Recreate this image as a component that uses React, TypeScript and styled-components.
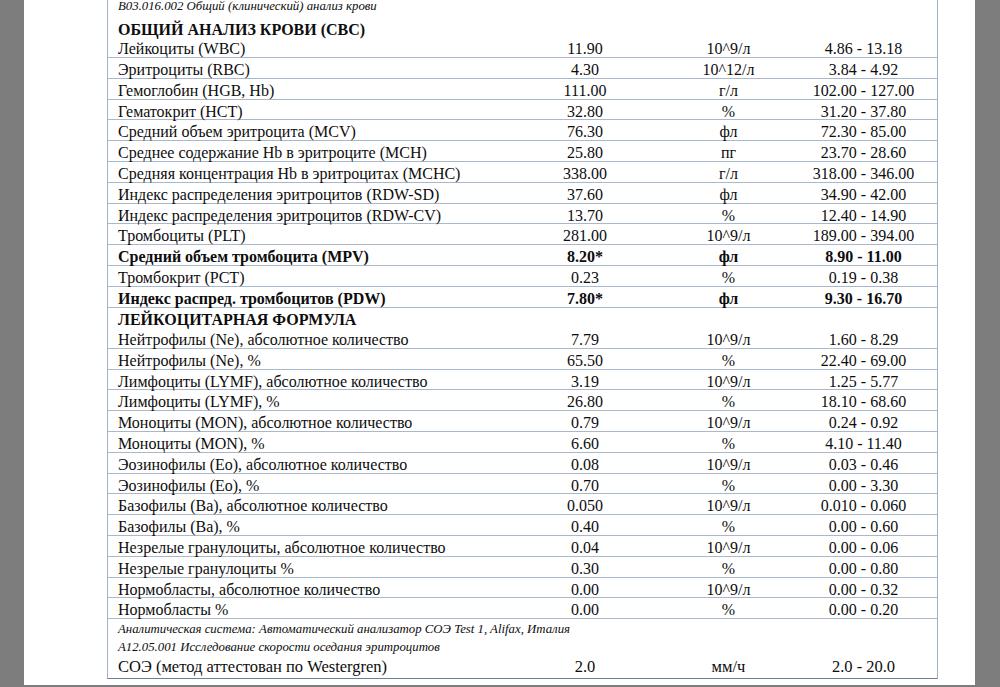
import React from 'react';
import styled, { createGlobalStyle } from 'styled-components';

const GlobalStyle = createGlobalStyle`
  html, body { margin: 0; padding: 0; background: #7d7d7d; }
  body { font-family: "Liberation Serif", "Times New Roman", serif; color: #0d0d0d; }
`;

const Screen = styled.div`
  width: 1000px;
  height: 687px;
  overflow: hidden;
  background: #7d7d7d;
`;

const Sheet = styled.div`
  width: 951px;
  height: 100%;
  margin-left: 24px;
  background: #ffffff;
  padding-left: 83px;
  box-sizing: border-box;
`;

const Table = styled.div`
  width: 831px;
  border-left: 1px solid #a3b3c7;
  border-right: 1px solid #a3b3c7;
  border-bottom: 1px solid #6a7f9c;
  margin-top: -2px;
  box-sizing: border-box;
`;

const Row = styled.div<{ $bold?: boolean }>`
  display: grid;
  grid-template-columns: 395px 164px 123px 147px;
  height: 20.8px;
  box-sizing: border-box;
  border-bottom: 1px solid #a9b8cb;
  font-size: 16px;
  line-height: 16px;
  font-weight: ${(p) => (p.$bold ? 700 : 400)};
`;

const LastRow = styled(Row)`
  height: 23px;
  border-bottom: none;
  font-size: 16.5px;
`;

const Name = styled.div`
  padding: 4px 0 0 10px;
  white-space: nowrap;
`;

const Cell = styled.div`
  padding-top: 4px;
  text-align: center;
  white-space: nowrap;
`;

const Heading = styled.div<{ $h: number }>`
  height: ${(p) => p.$h}px;
  box-sizing: border-box;
  padding: 4.6px 0 0 10px;
  font-size: 16px;
  line-height: 16px;
  font-weight: 700;
  white-space: nowrap;
`;

const Note = styled.div<{ $h: number; $pt: number }>`
  height: ${(p) => p.$h}px;
  box-sizing: border-box;
  padding: ${(p) => p.$pt}px 0 0 10px;
  font-size: 12.8px;
  line-height: 13px;
  font-style: italic;
  white-space: nowrap;
`;

type R = [string, string, string, string, boolean?];

const cbc: R[] = [
  ['Лейкоциты (WBC)', '11.90', '10^9/л', '4.86 - 13.18'],
  ['Эритроциты (RBC)', '4.30', '10^12/л', '3.84 - 4.92'],
  ['Гемоглобин (HGB, Hb)', '111.00', 'г/л', '102.00 - 127.00'],
  ['Гематокрит (HCT)', '32.80', '%', '31.20 - 37.80'],
  ['Средний объем эритроцита (MCV)', '76.30', 'фл', '72.30 - 85.00'],
  ['Среднее содержание Hb в эритроците (MCH)', '25.80', 'пг', '23.70 - 28.60'],
  ['Средняя концентрация Hb в эритроцитах (MCHC)', '338.00', 'г/л', '318.00 - 346.00'],
  ['Индекс распределения эритроцитов (RDW-SD)', '37.60', 'фл', '34.90 - 42.00'],
  ['Индекс распределения эритроцитов (RDW-CV)', '13.70', '%', '12.40 - 14.90'],
  ['Тромбоциты (PLT)', '281.00', '10^9/л', '189.00 - 394.00'],
  ['Средний объем тромбоцита (MPV)', '8.20*', 'фл', '8.90 - 11.00', true],
  ['Тромбокрит (PCT)', '0.23', '%', '0.19 - 0.38'],
  ['Индекс распред. тромбоцитов (PDW)', '7.80*', 'фл', '9.30 - 16.70', true],
];

const formula: R[] = [
  ['Нейтрофилы (Ne), абсолютное количество', '7.79', '10^9/л', '1.60 - 8.29'],
  ['Нейтрофилы (Ne), %', '65.50', '%', '22.40 - 69.00'],
  ['Лимфоциты (LYMF), абсолютное количество', '3.19', '10^9/л', '1.25 - 5.77'],
  ['Лимфоциты (LYMF), %', '26.80', '%', '18.10 - 68.60'],
  ['Моноциты (MON), абсолютное количество', '0.79', '10^9/л', '0.24 - 0.92'],
  ['Моноциты (MON), %', '6.60', '%', '4.10 - 11.40'],
  ['Эозинофилы (Eo), абсолютное количество', '0.08', '10^9/л', '0.03 - 0.46'],
  ['Эозинофилы (Eo), %', '0.70', '%', '0.00 - 3.30'],
  ['Базофилы (Ba), абсолютное количество', '0.050', '10^9/л', '0.010 - 0.060'],
  ['Базофилы (Ba), %', '0.40', '%', '0.00 - 0.60'],
  ['Незрелые гранулоциты, абсолютное количество', '0.04', '10^9/л', '0.00 - 0.06'],
  ['Незрелые гранулоциты %', '0.30', '%', '0.00 - 0.80'],
  ['Нормобласты, абсолютное количество', '0.00', '10^9/л', '0.00 - 0.32'],
  ['Нормобласты %', '0.00', '%', '0.00 - 0.20'],
];

const DataRow = ({ r }: { r: R }) => (
  <Row $bold={r[4]}>
    <Name>{r[0]}</Name>
    <Cell>{r[1]}</Cell>
    <Cell>{r[2]}</Cell>
    <Cell>{r[3]}</Cell>
  </Row>
);

export default function App() {
  return (
    <>
      <GlobalStyle />
      <Screen>
        <Sheet>
          <Table>
            <Note $h={19} $pt={1.5}>B03.016.002 Общий (клинический) анализ крови</Note>
            <Heading $h={20.2}>ОБЩИЙ АНАЛИЗ КРОВИ (CBC)</Heading>
            {cbc.map((r) => (
              <DataRow key={r[0]} r={r} />
            ))}
            <Heading $h={20.5}>ЛЕЙКОЦИТАРНАЯ ФОРМУЛА</Heading>
            {formula.map((r) => (
              <DataRow key={r[0]} r={r} />
            ))}
            <Note $h={18} $pt={4}>Аналитическая система: Автоматический анализатор СОЭ Test 1, Alifax, Италия</Note>
            <Note $h={18} $pt={4}>A12.05.001 Исследование скорости оседания эритроцитов</Note>
            <LastRow>
              <Name>СОЭ (метод аттестован по Westergren)</Name>
              <Cell>2.0</Cell>
              <Cell>мм/ч</Cell>
              <Cell>2.0 - 20.0</Cell>
            </LastRow>
          </Table>
        </Sheet>
      </Screen>
    </>
  );
}
